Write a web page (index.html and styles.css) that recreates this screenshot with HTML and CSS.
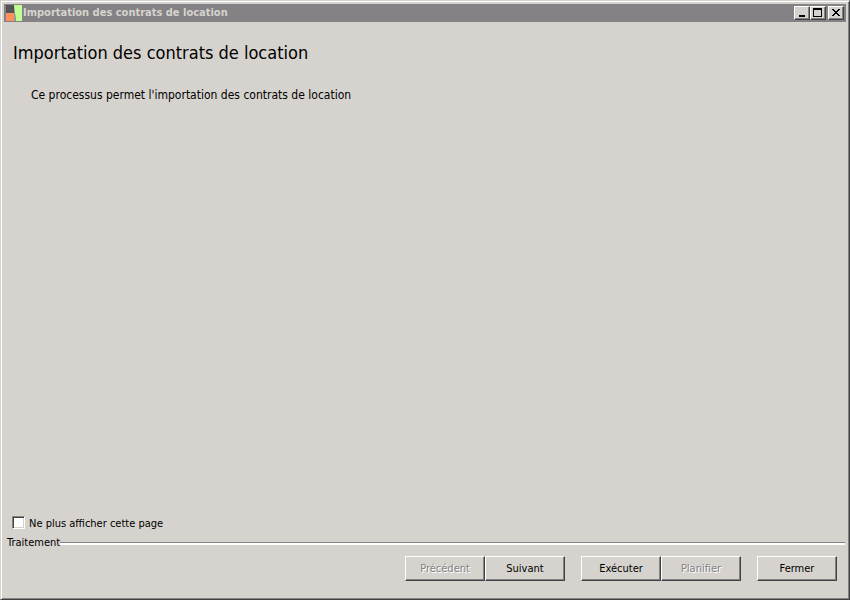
FILE: index.html
```
<!DOCTYPE html>
<html lang="fr">
  <head>
    <meta charset="UTF-8" />
    <meta name="viewport" content="width=device-width, initial-scale=1.0" />
    <title>Importation des contrats de location</title>
    <link rel="stylesheet" href="styles.css">
  </head>

  <body>
    <div class="window">
      <div class="title_bar">
        <svg class="logo" width="18" height="18" viewBox="0 0 18 18">
          <rect x="2" y="1" width="8" height="8" fill="#555355" />
          <rect x="2" y="9" width="8" height="8" fill="#ff9060" />
          <path d="M10 1h8v16h-6z" fill="#c0ff90" />
          <path d="M10 3l2 14h-2z" fill="#8a9a9c" />
        </svg>
        <span class="title">Importation des contrats de location</span>
        <div class="controls">
          <button type="button" aria-label="Réduire">
            <svg width="12" height="10" viewBox="0 0 12 10"><path d="M3 7h6v2H3z" /></svg>
          </button>
          <button type="button" aria-label="Agrandir">
            <svg width="12" height="10" viewBox="0 0 12 10"><path fill-rule="evenodd" d="M1 0h9v9H1zM2 2v6h7V2z" /></svg>
          </button>
          <button type="button" class="close" aria-label="Fermer la fenêtre">
            <svg width="12" height="10" viewBox="0 0 12 10"><path d="M2 1h2v1h1v1h2V2h1V1h2v1H9v1H8v1H7v1h1v1h1v1h1v1H8V7H7V6H5v1H4v1H2V7h1V6h1V5h1V4H4V3H3V2H2z" /></svg>
          </button>
        </div>
      </div>

      <div class="content">
        <h1>Importation des contrats de location</h1>
        <p>Ce processus permet l'importation des contrats de location</p>
      </div>

      <label class="skip"><input type="checkbox">Ne plus afficher cette page</label>

      <div class="separator">Traitement</div>

      <div class="actions">
        <div class="group">
          <button type="button" disabled>Précédent</button>
          <button type="button">Suivant</button>
        </div>
        <div class="group">
          <button type="button">Exécuter</button>
          <button type="button" disabled>Planifier</button>
        </div>
        <div class="group">
          <button type="button">Fermer</button>
        </div>
      </div>
    </div>
  </body>
</html>
```
FILE: styles.css
```
* {
  box-sizing: border-box;
  margin: 0;
  padding: 0;
}

body {
  font-family: "DejaVu Sans Condensed", "Noto Sans", sans-serif;
  font-size: 11px;
  line-height: 16px;
  color: #000;
}

button {
  font: inherit;
  color: inherit;
  background-color: #d6d3ce;
}

.window {
  display: flex;
  flex-direction: column;
  min-height: 100vh;
  padding: 2px;
  background-color: #d6d3ce;
  border: 1px solid;
  border-color: #d6d3ce #424142 #424142 #d6d3ce;
  box-shadow: inset 1px 1px #fff, inset -1px -1px #848284;
}

.title_bar {
  display: flex;
  align-items: center;
  height: 18px;
  margin: 1px;
  padding-right: 2px;
  background-color: #848284;
}

.title {
  flex: 1;
  margin-left: 1px;
  color: #d6d3ce;
  font-weight: bold;
  line-height: 18px;
}

.controls {
  display: flex;
}

.controls button {
  display: flex;
  width: 16px;
  height: 14px;
  padding: 1px;
  border: 1px solid;
  border-color: #fff #424142 #424142 #fff;
  box-shadow: inset -1px -1px #848284;
}

.controls .close {
  margin-left: 2px;
}

.content {
  flex: 1;
  padding: 20px 10px;
}

h1 {
  font-size: 18px;
  font-weight: normal;
  line-height: 20px;
}

p {
  margin: 22px 18px;
  font-size: 12px;
  line-height: 20px;
}

.skip {
  display: flex;
  align-self: flex-start;
  gap: 4px;
  margin-left: 9px;
}

.skip input {
  appearance: none;
  width: 13px;
  height: 13px;
  background-color: #fff;
  border: 1px solid;
  border-color: #848284 #fff #fff #848284;
  box-shadow: inset 1px 1px #424142, inset -1px -1px #d6d3ce;
}

.skip input:checked {
  background-image: linear-gradient(#000, #000);
  background-size: 5px 5px;
  background-position: center;
  background-repeat: no-repeat;
}

.separator {
  display: flex;
  align-items: center;
  margin: 3px 2px 0 4px;
}

.separator::after {
  content: "";
  flex: 1;
  height: 2px;
  background-color: #fff;
  border-top: 1px solid #848284;
}

.actions {
  display: flex;
  justify-content: flex-end;
  gap: 16px;
  padding: 5px 10px 16px;
}

.group {
  display: flex;
}

.group button {
  width: 80px;
  height: 25px;
  border: 1px solid;
  border-color: #fff #424142 #424142 #fff;
  box-shadow: inset -1px -1px #848284;
}

.group button:disabled {
  color: #848284;
  text-shadow: 1px 1px #fff;
}
```
